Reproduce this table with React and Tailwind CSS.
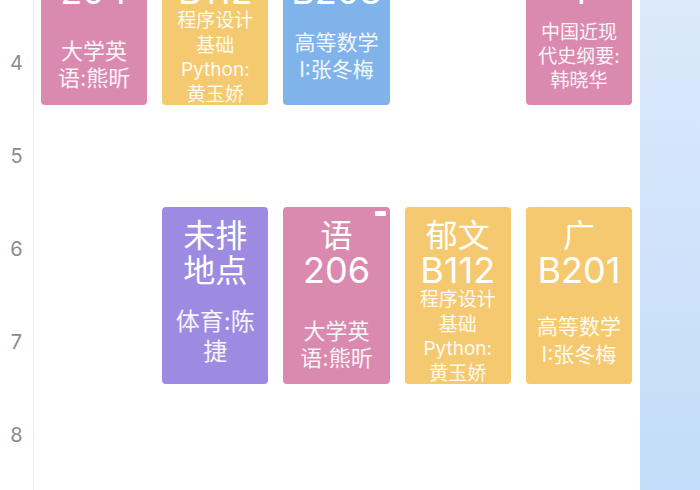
import React from "react";

const ROWS = [3, 4, 5, 6, 7, 8, 9];

function Card({ pos, color, big, small, smallCls, badge }) {
  return (
    <div className={`${pos} row-span-2 pb-[4px] pl-[7px] pr-[8px] pt-[5px]`}>
      <div className={`relative flex h-full flex-col items-center overflow-hidden rounded-[4px] pt-[11px] text-center ${color}`}>
        {badge && <div className="absolute right-[4px] top-[4px] h-[5px] w-[11px] rounded-[1px] bg-white" />}
        {big.map((b, i) => (
          <div key={i} className={`whitespace-nowrap leading-[35px] text-white ${b.cls}`}>{b.t}</div>
        ))}
        <div className={`text-white/90 ${smallCls}`}>
          {small.map((s, i) => (
            <div key={i} className="whitespace-nowrap">{s}</div>
          ))}
        </div>
      </div>
    </div>
  );
}

const CJ = "text-[32px]";
const LA = "text-[36px]";

export default function App() {
  return (
    <div className="flex h-[490px] w-[700px] overflow-hidden bg-white font-['Inter','Noto_Sans_CJK_SC',sans-serif]">
      <div className="flex w-[640px]">
        <div className="mt-[-77px] flex w-[34px] shrink-0 flex-col border-r border-[#ececec]">
          {ROWS.map((r) => (
            <div key={r} className="flex h-[93px] shrink-0 items-center justify-center pt-[1px] text-[20px] text-[#8c8c8c]">
              {r}
            </div>
          ))}
        </div>
        <div className="mt-[-77px] grid flex-1 grid-cols-5 grid-rows-[repeat(7,93px)]">
          <Card
            pos="col-start-1 row-start-1"
            color="bg-[#d98aae]"
            big={[{ t: "语", cls: CJ }, { t: "204", cls: LA }]}
            small={["大学英", "语:熊昕"]}
            smallCls="mt-[29px] text-[22px] leading-[27px]"
          />
          <Card
            pos="col-start-2 row-start-1"
            color="bg-[#f5c96f]"
            big={[{ t: "郁文", cls: CJ }, { t: "B112", cls: LA }]}
            small={["程序设计", "基础", "Python:", "黄玉娇"]}
            smallCls="mt-[0px] text-[19px] leading-[24.5px]"
          />
          <Card
            pos="col-start-3 row-start-1"
            color="bg-[#80b3ea]"
            big={[{ t: "广", cls: CJ }, { t: "B203", cls: LA }]}
            small={["高等数学", "I:张冬梅"]}
            smallCls="mt-[21px] text-[21px] leading-[26.5px]"
          />
          <Card
            pos="col-start-5 row-start-1"
            color="bg-[#d98aae]"
            big={[{ t: "文科楼", cls: CJ }, { t: "1", cls: LA }]}
            small={["中国近现", "代史纲要:", "韩晓华"]}
            smallCls="mt-[12px] text-[19px] leading-[24px]"
          />
          <Card
            pos="col-start-2 row-start-4"
            color="bg-[#9c8be0]"
            big={[{ t: "未排", cls: CJ }, { t: "地点", cls: CJ }]}
            small={["体育:陈", "捷"]}
            smallCls="mt-[19px] text-[24px] leading-[30px]"
          />
          <Card
            pos="col-start-3 row-start-4"
            color="bg-[#d98aae]"
            badge
            big={[{ t: "语", cls: CJ }, { t: "206", cls: LA }]}
            small={["大学英", "语:熊昕"]}
            smallCls="mt-[30px] text-[22px] leading-[27px]"
          />
          <Card
            pos="col-start-4 row-start-4"
            color="bg-[#f5c96f]"
            big={[{ t: "郁文", cls: CJ }, { t: "B112", cls: LA }]}
            small={["程序设计", "基础", "Python:", "黄玉娇"]}
            smallCls="mt-[0px] text-[19px] leading-[24.5px]"
          />
          <Card
            pos="col-start-5 row-start-4"
            color="bg-[#f5c96f]"
            big={[{ t: "广", cls: CJ }, { t: "B201", cls: LA }]}
            small={["高等数学", "I:张冬梅"]}
            smallCls="mt-[25px] text-[21px] leading-[27.5px]"
          />
        </div>
      </div>
      <div className="w-[60px] shrink-0 bg-gradient-to-b from-[#dce9fb] to-[#c2dcf9]" />
    </div>
  );
}
